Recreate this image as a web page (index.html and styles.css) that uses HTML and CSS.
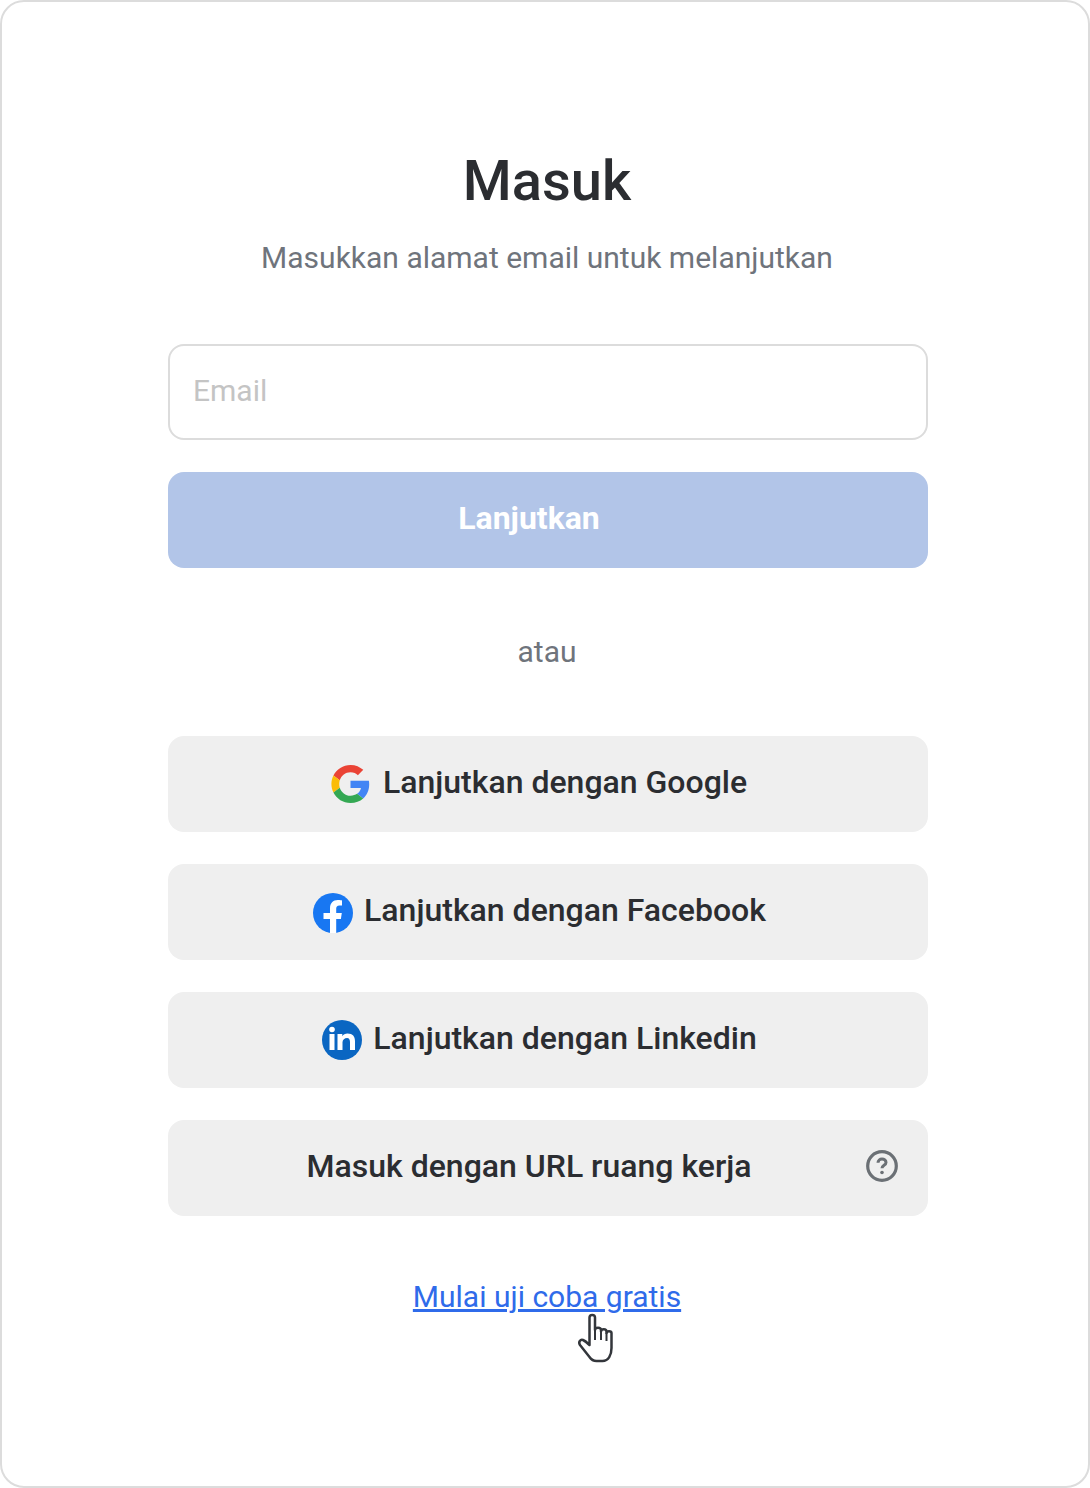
FILE: index.html
```html
<!DOCTYPE html>
<html lang="en">
<head>
    <meta charset="UTF-8">
    <meta name="viewport" content="width=device-width, initial-scale=1.0">
    <title>Masuk</title>
    <link rel="stylesheet" href="styles.css">
</head>
<body>

    <div class="card">
        <h1 class="title">Masuk</h1>
        <p class="subtitle">Masukkan alamat email untuk melanjutkan</p>

        <!-- Email form -->
        <div class="email-box">Email</div>
        <div class="btn btn-primary"><span class="btn-label">Lanjutkan</span></div>

        <div class="divider">atau</div>

        <!-- Social logins -->
        <div class="social-list">
            <div class="btn btn-social">
                <svg class="logo logo-google" viewBox="0 0 48 48">
                    <path fill="#ea4335" d="M24 9.500c3.900 0 6.900 1.600 9.100 3.600l6.600-6.500C35.600 2.800 30.300.5 24 .5 14.800.5 6.900 5.800 3 13.500l7.800 6C12.600 13.700 17.800 9.500 24 9.500z"/>
                    <path fill="#4285f4" d="M47 24.500c0-1.600-.1-3.100-.4-4.500H24v9h12.900c-.6 3-2.200 5.400-4.800 7.100l7.500 5.800C44 37.800 47 31.800 47 24.500z"/>
                    <path fill="#fbbc05" d="M10.800 28.500c-.5-1.400-.7-2.900-.7-4.500s.3-3.100.7-4.500l-7.800-6C1.400 16.700.5 20.200.5 24s.9 7.300 2.500 10.500l7.800-6z"/>
                    <path fill="#34a853" d="M24 47.500c6.300 0 11.600-2.100 15.600-5.600l-7.500-5.800c-2.100 1.400-4.800 2.300-8.100 2.300-6.200 0-11.400-4.200-13.200-9.900l-7.800 6C6.900 42.200 14.800 47.500 24 47.500z"/>
                </svg>
                <span class="btn-label">Lanjutkan dengan Google</span>
            </div>
            <div class="btn btn-social">
                <svg class="logo logo-fb" viewBox="0 0 40 40">
                    <circle cx="20" cy="20" r="20" fill="#1877f2"/>
                    <path fill="#fff" d="M17 40V26h-6.500v-6H17v-4.500C17 10 20 7 24.800 7c2.200 0 4.200.4 4.200.4v5.200h-2.500c-2.500 0-3.300 1.500-3.300 3.100V20h5.600l-.9 6H23.200v14z"/>
                </svg>
                <span class="btn-label">Lanjutkan dengan Facebook</span>
            </div>
            <div class="btn btn-social">
                <svg class="logo logo-in" viewBox="0 0 40 40">
                    <circle cx="20" cy="20" r="20" fill="#0a66c2"/>
                    <rect x="7.500" y="14" width="5" height="16" fill="#fff"/>
                    <circle cx="10" cy="9.500" r="2.800" fill="#fff"/>
                    <path fill="#fff" d="M15.500 14h4.800v2.200c1-1.600 2.900-2.700 5.200-2.700 5.300 0 7.500 3 7.500 7.700V30h-5v-8c0-2.300-.8-4-2.900-4-2.400 0-4.600 1.600-4.600 4.300V30h-5z"/>
                </svg>
                <span class="btn-label">Lanjutkan dengan Linkedin</span>
            </div>
            <div class="btn btn-url">
                <span class="btn-label">Masuk dengan URL ruang kerja</span>
                <svg class="help" viewBox="0 0 32 32">
                    <circle cx="16" cy="16" r="14.300" fill="none" stroke="#6b7075" stroke-width="3.200"/>
                    <path fill="none" stroke="#6b7075" stroke-width="3" d="M12 12.800c0-2.300 1.800-3.800 4-3.800s4 1.400 4 3.400c0 2.900-4 2.900-4 5.800"/>
                    <circle cx="16" cy="22.500" r="1.800" fill="#6b7075"/>
                </svg>
            </div>
        </div>

        <div class="trial">
            <a class="trial-link" href="#">Mulai uji coba gratis</a>
            <!-- Mouse pointer captured over the link -->
            <svg class="hand" viewBox="0 0 37 50">
                <path fill="#fff" stroke="#33363b" stroke-width="2.500" stroke-linejoin="round" d="M12 28V4.500C12 1 17.500 1 17.500 4.500V17c0-3 6-3 6 0v1.500c0-3 5.500-3 5.500 0V20c0-2.500 5-2.500 5 0v15c0 7-3 13-9 13h-6c-3 0-5-1-7-4L2.500 32c-2-3 .5-6 3-5 2 .8 4.500 3 6.500 5z"/>
                <path fill="none" stroke="#33363b" stroke-width="2" d="M17.500 17v10M23.500 18v9M29 20v8"/>
            </svg>
        </div>
    </div>

</body>
</html>
```

FILE: styles.css
```css
body {
    margin: 0;
    padding: 0;
    background-color: white;
    font-family: Roboto, sans-serif;
}

.card {
    box-sizing: border-box;
    width: 1090px;
    height: 1488px;
    border: 2px solid #dcdcdc;
    border-radius: 24px;
    padding-top: 147px;
    padding-left: 6px;
    display: flex;
    flex-direction: column;
    align-items: center;
}

.title {
    margin: 0 2px 0 0;
    font-size: 56px;
    line-height: 64px;
    font-weight: 500;
    color: #2b2d31;
}

.subtitle {
    margin: 25px 2px 0 0;
    font-size: 30px;
    line-height: 40px;
    color: #6f747c;
}

.email-box {
    box-sizing: border-box;
    width: 760px;
    height: 96px;
    margin-top: 66px;
    padding-left: 23px;
    border: 2px solid #dcdcdc;
    border-radius: 16px;
    font-size: 30px;
    line-height: 90px;
    color: #c4c4c4;
}

.btn {
    box-sizing: border-box;
    width: 760px;
    height: 96px;
    border-radius: 16px;
    display: flex;
    align-items: center;
    justify-content: center;
    font-size: 32px;
    font-weight: 500;
    color: #2b2d31;
    background-color: #efefef;
    position: relative;
}

.btn-label {
    padding-bottom: 4px;
}

.btn-primary {
    margin-top: 32px;
    padding-right: 38px;
    background-color: #b2c5e8;
    color: white;
    font-weight: 700;
}

.divider {
    margin: 64px 2px 0 0;
    font-size: 30px;
    line-height: 40px;
    color: #6f747c;
}

.social-list {
    margin-top: 64px;
    display: flex;
    flex-direction: column;
    gap: 32px;
}

.btn-social {
    padding-right: 18px;
    gap: 12px;
}

.btn-url {
    padding-right: 38px;
}

.logo {
    width: 40px;
    height: 40px;
    flex-shrink: 0;
}

.logo-google {
    width: 39px;
    margin-right: 1px;
}

.logo-fb {
    margin: 2px -1px 0 1px;
}

.logo-in {
    margin: 0 -1px 0 1px;
}

/* Help icon sits on top of the last button */
.help {
    position: absolute;
    top: 30px;
    right: 30px;
    width: 32px;
    height: 32px;
}

.trial {
    margin: 61px 2px 0 0;
    position: relative;
    font-size: 30px;
    line-height: 40px;
}

.trial-link {
    color: #2f6bea;
    text-decoration: underline;
}

.hand {
    position: absolute;
    top: 36px;
    left: 164px;
    width: 38px;
    height: 50px;
}
```
